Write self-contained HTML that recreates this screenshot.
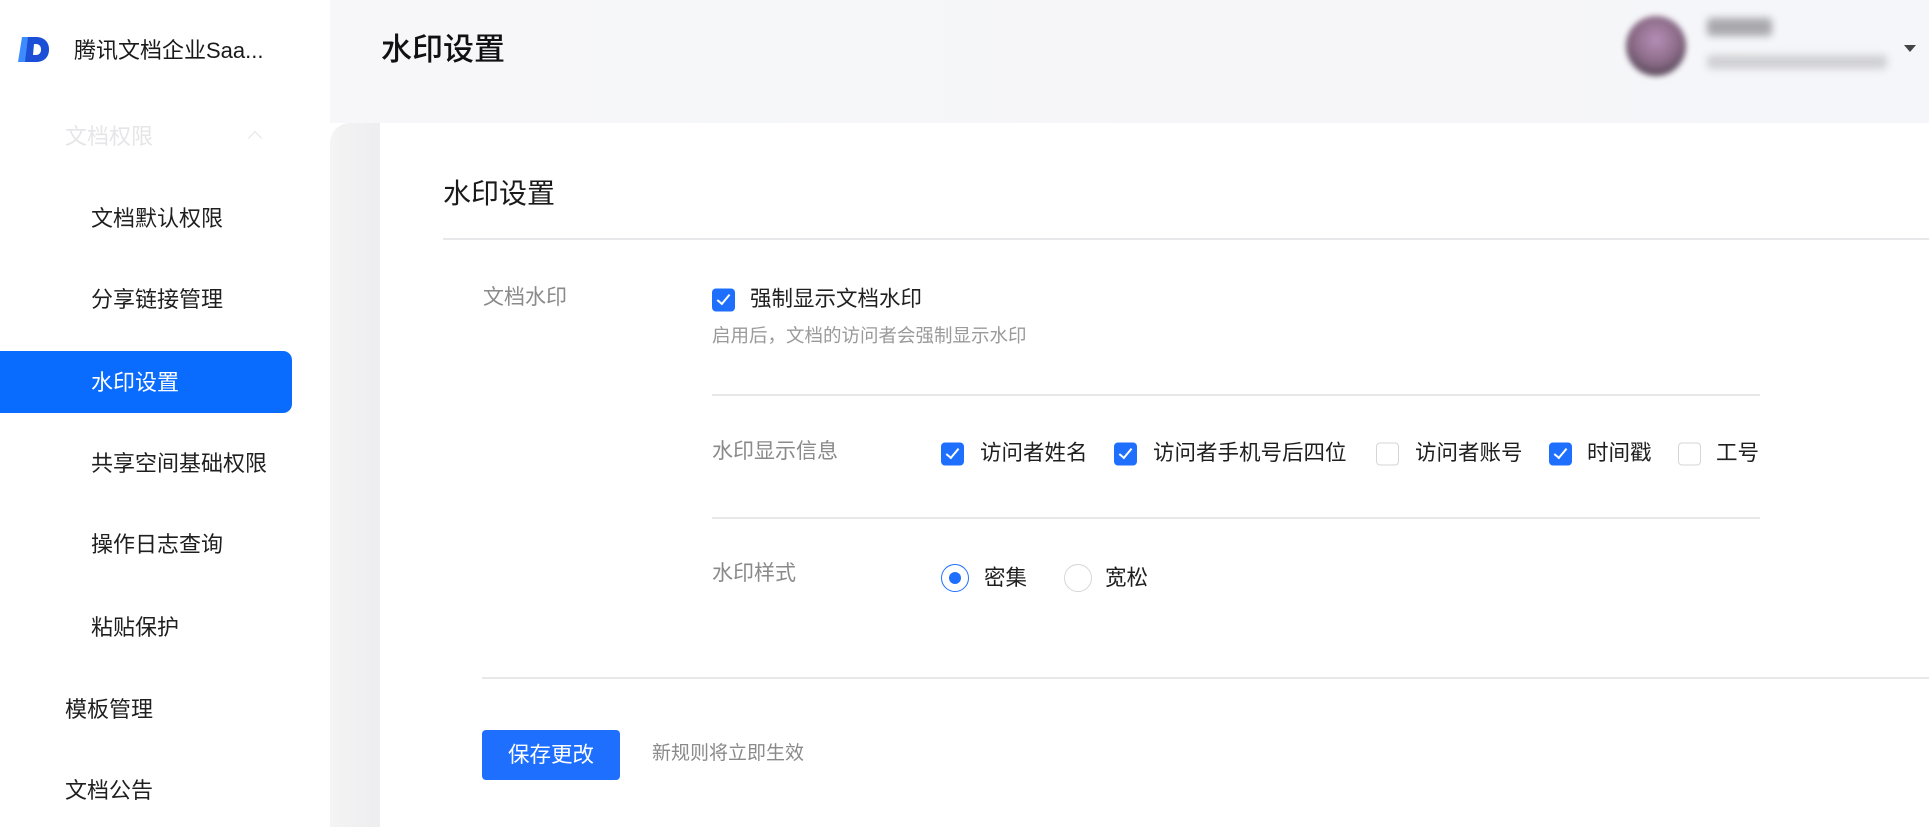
<!DOCTYPE html>
<html><head><meta charset="utf-8"><style>
*{margin:0;padding:0;box-sizing:border-box}
body{width:1929px;height:827px;overflow:hidden;position:relative;background:#fff;font-family:"Liberation Sans","Noto Sans CJK SC",sans-serif;color:#1f1f1f}
.a{position:absolute;white-space:nowrap}
.side{position:absolute;left:0;top:0;width:330px;height:827px;background:#fff}
.mi{position:absolute;left:91px;font-size:22px;line-height:26px;color:#1f1f1f;transform:translateY(-50%)}
.hdr{position:absolute;left:330px;top:0;width:1599px;height:123px;background:linear-gradient(90deg,#f7f7f9,#f5f6f9)}
.gray{position:absolute;left:330px;top:123px;width:60px;height:704px;background:linear-gradient(90deg,#f4f4f5,#ececee);border-top-left-radius:20px}
.card{position:absolute;left:380px;top:123px;width:1549px;height:704px;background:#fff}
.line{position:absolute;height:2px;background:#e8e8ea}
.cb{position:absolute;width:23px;height:23px;border-radius:4px;transform:translateY(-50%)}
.cb.on{background:#1f6fff}
.cb.on::after{content:"";position:absolute;left:8px;top:3px;width:5px;height:11px;border:solid #fff;border-width:0 2.5px 2.5px 0;transform:rotate(40deg)}
.cb.off{border:1.5px solid #d6d6d9;background:#fff}
.lbl{position:absolute;font-size:21.5px;line-height:26px;transform:translateY(-50%);color:#1f1f1f}
.gl{position:absolute;font-size:21px;line-height:26px;transform:translateY(-50%);color:#8a8a8a}
</style></head><body>
<div class="side">
<svg class="a" style="left:18px;top:37px" width="32" height="25" viewBox="0 0 32 25"><path d="M4 0h8v25H0z" fill="#3d8bff"/><path d="M10 0h8c8 0 13 5 13 12.5S26 25 18 25H7z" fill="#1a4fd6"/><path d="M16 7h2c3 0 5 2 5 5.5S21 18 18 18h-3z" fill="#fff"/></svg>
<div class="a" style="left:74px;top:38px;font-size:22px;line-height:26px;color:#1a1a1a">腾讯文档企业Saa...</div>
<div class="a" style="left:65px;top:124px;font-size:22px;line-height:26px;color:#e6e6e8">文档权限</div>
<div class="a" style="left:250px;top:133px;width:10px;height:10px;border-left:1.5px solid #e4e4e6;border-top:1.5px solid #e4e4e6;transform:rotate(45deg)"></div>
<div class="mi" style="top:219px">文档默认权限</div>
<div class="mi" style="top:300px">分享链接管理</div>
<div class="a" style="left:0;top:351px;width:292px;height:62px;background:#0a6cff;border-radius:0 9px 9px 0"></div>
<div class="mi" style="top:383px;color:#fff">水印设置</div>
<div class="mi" style="top:464px">共享空间基础权限</div>
<div class="mi" style="top:545px">操作日志查询</div>
<div class="mi" style="top:628px">粘贴保护</div>
<div class="mi" style="top:710px;left:65px">模板管理</div>
<div class="mi" style="top:791px;left:65px">文档公告</div>
</div>
<div class="hdr"></div>
<div class="a" style="left:381px;top:31px;font-size:31px;line-height:38px;font-weight:500;color:#111">水印设置</div>
<div class="a" style="left:1626px;top:16px;width:60px;height:60px;border-radius:50%;background:radial-gradient(circle at 50% 40%,#b68fb8,#8a6a86 50%,#5a4a5c 75%,#d8d4dc);filter:blur(3px)"></div>
<div class="a" style="left:1707px;top:18px;width:65px;height:18px;background:#a8a8ad;border-radius:4px;filter:blur(4px)"></div>
<div class="a" style="left:1707px;top:55px;width:180px;height:14px;background:#d0d0d4;border-radius:4px;filter:blur(4px)"></div>
<div class="a" style="left:1904px;top:45px;width:0;height:0;border-left:6px solid transparent;border-right:6px solid transparent;border-top:7px solid #444"></div>
<div class="gray"></div>
<div class="card"></div>
<div class="a" style="left:443px;top:178px;font-size:28px;line-height:32px;color:#1a1a1a">水印设置</div>
<div class="line" style="left:443px;top:238px;width:1486px"></div>
<div class="gl" style="left:483px;top:298px">文档水印</div>
<div class="cb on" style="left:712px;top:300px"></div>
<div class="lbl" style="left:750px;top:299px">强制显示文档水印</div>
<div class="a" style="left:712px;top:325px;font-size:18.5px;line-height:22px;color:#9a9a9a">启用后，文档的访问者会强制显示水印</div>
<div class="line" style="left:712px;top:394px;width:1048px"></div>
<div class="gl" style="left:712px;top:452px">水印显示信息</div>
<div class="cb on" style="left:941px;top:454px"></div><div class="lbl" style="left:980px;top:453px">访问者姓名</div>
<div class="cb on" style="left:1114px;top:454px"></div><div class="lbl" style="left:1153px;top:453px">访问者手机号后四位</div>
<div class="cb off" style="left:1376px;top:454px"></div><div class="lbl" style="left:1415px;top:453px">访问者账号</div>
<div class="cb on" style="left:1549px;top:454px"></div><div class="lbl" style="left:1587px;top:453px">时间戳</div>
<div class="cb off" style="left:1678px;top:454px"></div><div class="lbl" style="left:1716px;top:453px">工号</div>
<div class="line" style="left:712px;top:517px;width:1048px"></div>
<div class="gl" style="left:712px;top:574px">水印样式</div>
<div class="a" style="left:941px;top:564px;width:28px;height:28px;border-radius:50%;border:1.5px solid #1f6fff"></div>
<div class="a" style="left:949px;top:572px;width:12px;height:12px;border-radius:50%;background:#1f6fff"></div>
<div class="lbl" style="left:984px;top:578px">密集</div>
<div class="a" style="left:1064px;top:564px;width:28px;height:28px;border-radius:50%;border:1.5px solid #d6d6d9"></div>
<div class="lbl" style="left:1105px;top:578px">宽松</div>
<div class="line" style="left:482px;top:677px;width:1447px"></div>
<div class="a" style="left:482px;top:730px;width:138px;height:50px;background:#1f6fff;border-radius:4px;color:#fff;font-size:21.5px;line-height:50px;text-align:center">保存更改</div>
<div class="gl" style="left:652px;top:754px;color:#8a8a8a;font-size:19px">新规则将立即生效</div>
</body></html>
